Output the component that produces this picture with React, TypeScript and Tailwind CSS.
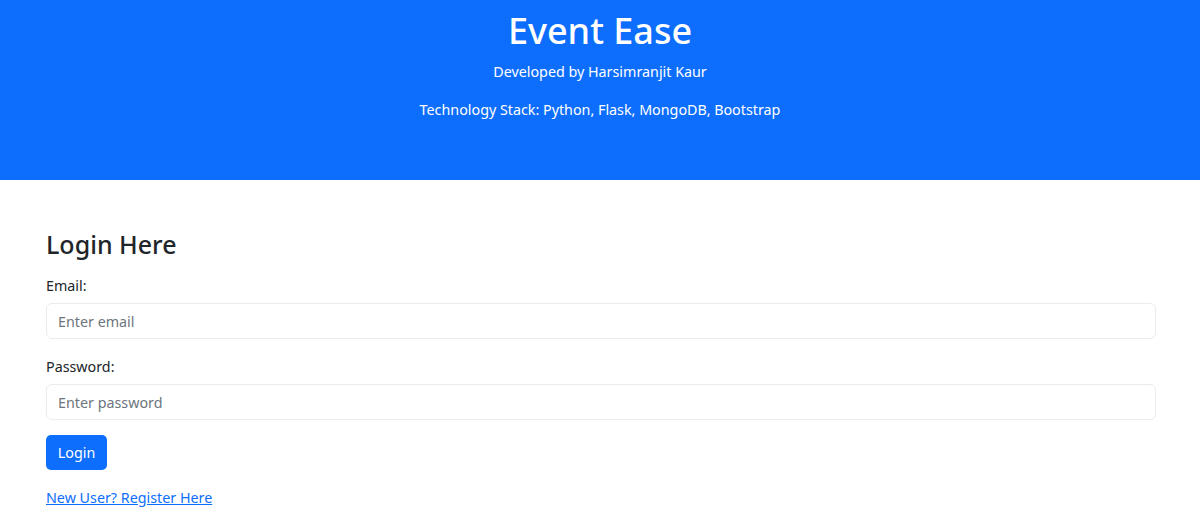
import React, { useState } from 'react';

const App: React.FC = () => {
  const [email, setEmail] = useState('');
  const [password, setPassword] = useState('');

  return (
    <div className="min-h-screen bg-white text-[#212529] font-['Noto_Sans',sans-serif]">
      <header className="h-[180px] bg-[#0d6efd] pt-[7px] text-center text-white">
        <h1 className="text-[36px] font-medium leading-[48px]">Event Ease</h1>
        <p className="mt-[5px] text-[14.3px] leading-[24px]">Developed by Harsimranjit Kaur</p>
        <p className="mt-[14px] text-[14.3px] leading-[24px]">
          Technology Stack: Python, Flask, MongoDB, Bootstrap
        </p>
      </header>

      {/* Login form */}
      <main className="px-[46px] pt-[47px] pr-[44px]">
        <h2 className="text-[25px] font-medium leading-[34px]">Login Here</h2>
        <form className="mt-[13px] flex flex-col" onSubmit={(e) => e.preventDefault()}>
          <label className="text-[14.3px] leading-[24px]" htmlFor="email">
            Email:
          </label>
          <input
            id="email"
            type="email"
            value={email}
            onChange={(e) => setEmail(e.target.value)}
            placeholder="Enter email"
            className="mt-[5px] h-[36px] w-full rounded-[6px] border border-[#e9ecef] px-[11px] text-[14.3px] placeholder:text-[#6c757d] outline-none"
          />
          <label className="mt-[16px] text-[14.3px] leading-[24px]" htmlFor="password">
            Password:
          </label>
          <input
            id="password"
            type="password"
            value={password}
            onChange={(e) => setPassword(e.target.value)}
            placeholder="Enter password"
            className="mt-[5px] h-[36px] w-full rounded-[6px] border border-[#e9ecef] px-[11px] text-[14.3px] placeholder:text-[#6c757d] outline-none"
          />
          <div className="mt-[15px]">
            <button
              type="submit"
              className="h-[35px] w-[61px] rounded-[5px] bg-[#0d6efd] text-[14.3px] text-white"
            >
              Login
            </button>
          </div>
        </form>
        <a href="#" className="mt-[16px] inline-block text-[14.3px] leading-[24px] text-[#0d6efd] underline">
          New User? Register Here
        </a>
      </main>
    </div>
  );
};

export default App;
